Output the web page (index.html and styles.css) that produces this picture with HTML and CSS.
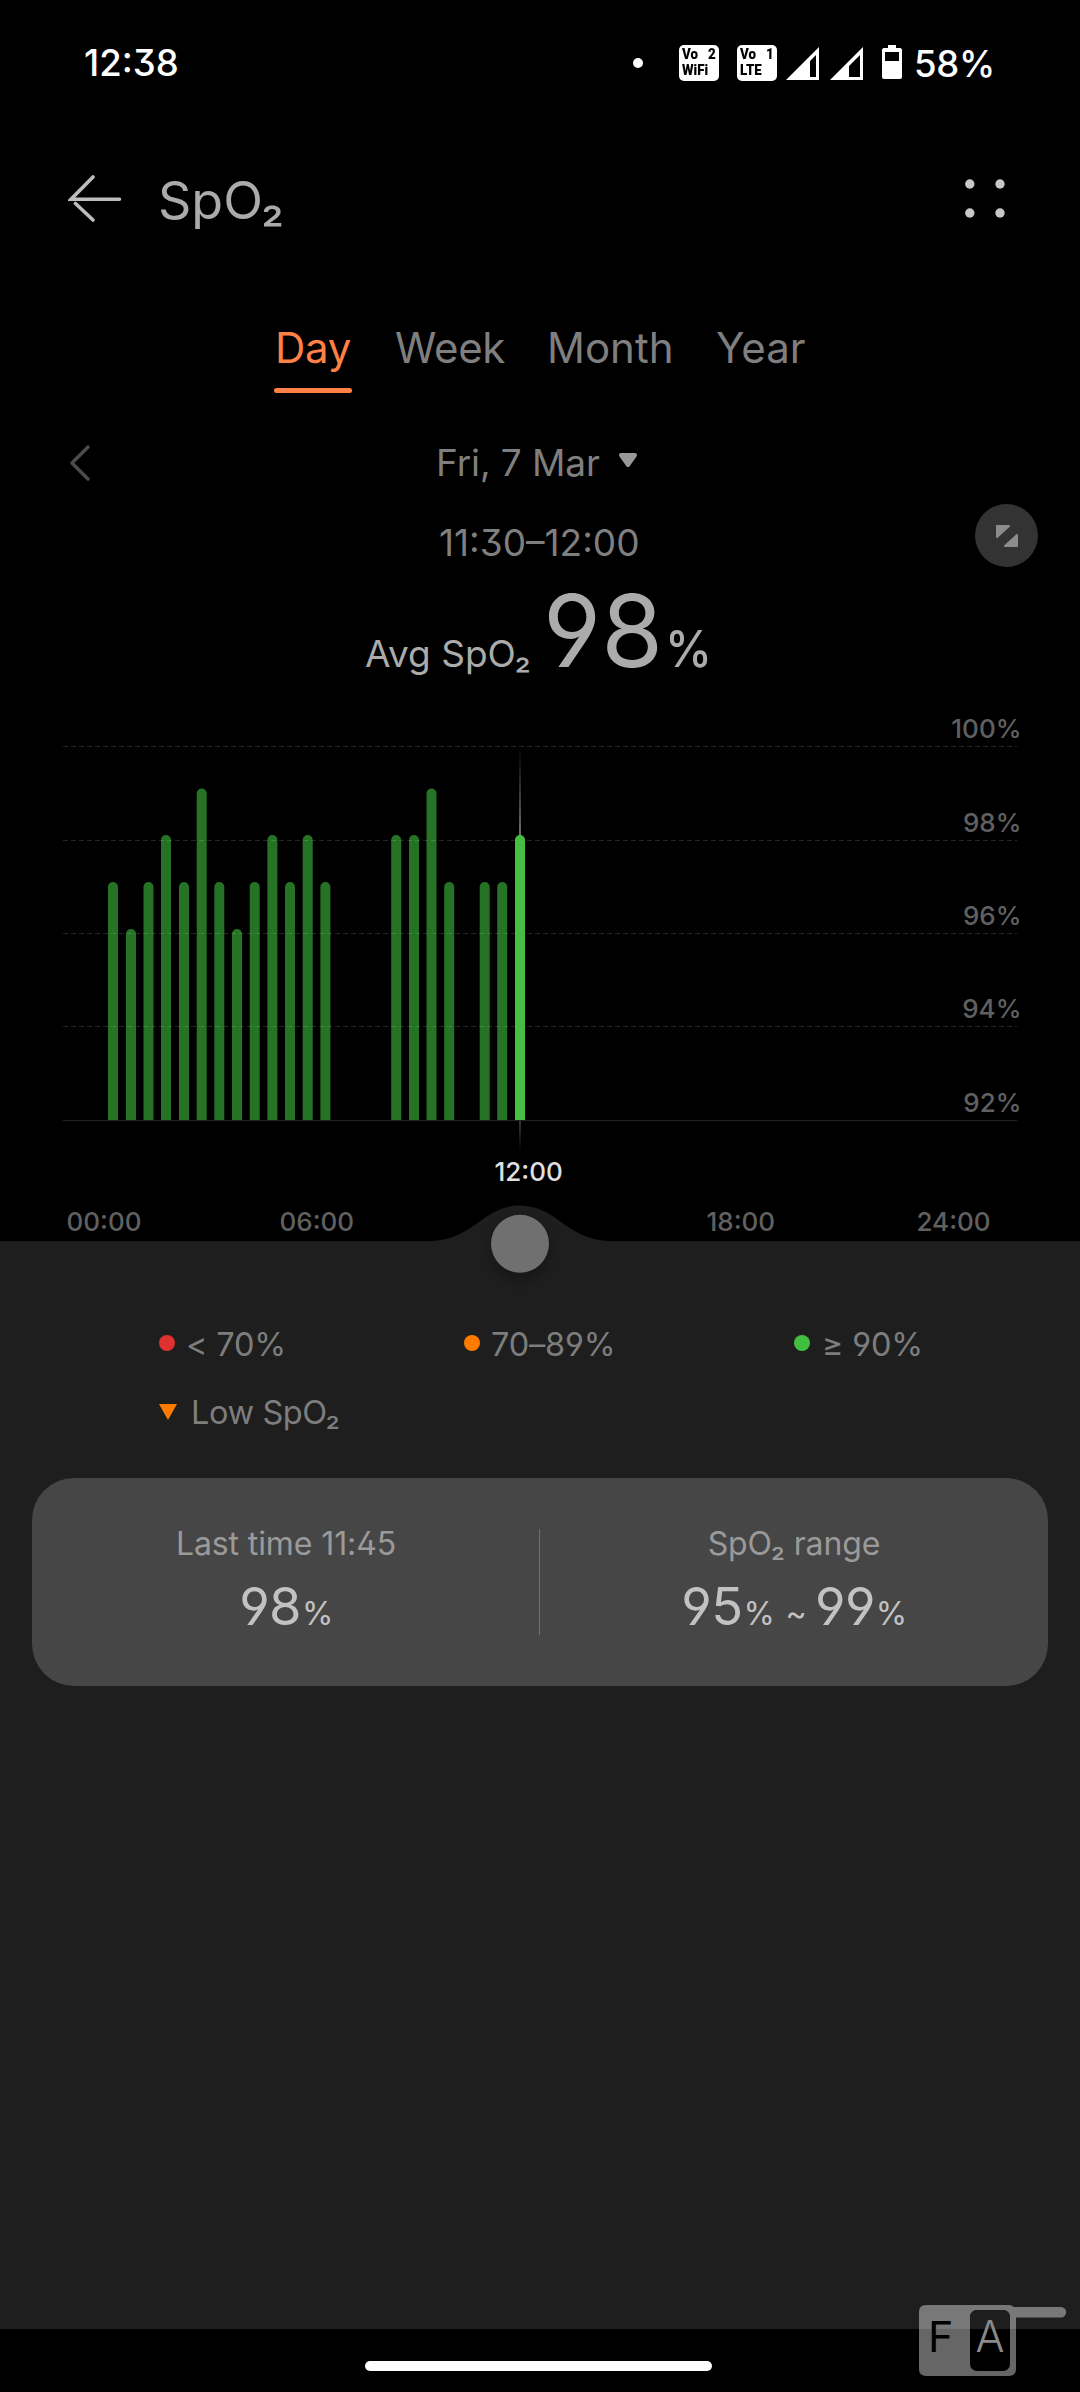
FILE: index.html
```html
<!DOCTYPE html>
<html lang="en">
<head>
<meta charset="utf-8">
<title>SpO₂</title>
<link rel="stylesheet" href="styles.css">
</head>
<body>
<div class="screen">
  <div class="status">
    <span class="clock">12:38</span>
    <span class="notice"></span>
    <div class="vo vo-wifi"><div class="vo-top"><b>Vo</b><b>2</b></div><b>WiFi</b></div>
    <div class="vo"><div class="vo-top"><b>Vo</b><b>1</b></div><b>LTE</b></div>
    <svg class="signal" width="33" height="33" viewBox="0 0 33 33"><path fill="#fff" fill-rule="evenodd" d="M33 0V33H0ZM30 8 24 14V30H30Z"/></svg>
    <svg class="signal signal-2" width="33" height="33" viewBox="0 0 33 33"><path fill="#fff" fill-rule="evenodd" d="M33 0V33H0ZM30 8 19 19V30H30Z"/></svg>
    <svg class="battery" width="20" height="34" viewBox="0 0 20 34"><path fill="#fff" fill-rule="evenodd" d="M6 0H14V3H18Q20 3 20 5V32Q20 34 18 34H2Q0 34 0 32V5Q0 3 2 3H6ZM3 7V16H17V7Z"/></svg>
    <span class="charge">58%</span>
  </div>

  <header class="header">
    <svg class="back" width="54" height="50" viewBox="0 0 54 50" fill="none" stroke="#bdbdbd" stroke-width="3.6" stroke-linecap="round"><path d="M25 3 3 25.300H51.500M7.500 29.500 25 46"/></svg>
    <h1 class="title">SpO₂</h1>
    <svg class="more" width="40" height="40" viewBox="0 0 40 40" fill="#c8c8c8"><circle cx="4.8" cy="5" r="4.7"/><circle cx="35" cy="5" r="4.7"/><circle cx="4.8" cy="34" r="4.7"/><circle cx="35" cy="34" r="4.7"/></svg>
  </header>

  <nav class="tabs">
    <span class="tab tab-active">Day</span><span class="tab tab-week">Week</span><span class="tab tab-month">Month</span><span class="tab">Year</span>
  </nav>

  <div class="date-row">
    <svg class="prev" width="24" height="38" viewBox="0 0 24 38" fill="none" stroke="#4c4c4c" stroke-width="3.4" stroke-linecap="round" stroke-linejoin="round"><path d="M20 3 4 19 20 35"/></svg>
    <span class="date">Fri, 7 Mar</span>
    <svg class="caret" width="20" height="16" viewBox="0 0 20 16"><path fill="#999" stroke="#999" stroke-width="4" stroke-linejoin="round" d="M3 3H17L10 13Z"/></svg>
  </div>

  <div class="range-row">
    <span class="range">11:30–12:00</span>
    <div class="expand"><svg width="24" height="24" viewBox="0 0 24 24" fill="#8c8c8c" stroke="#8c8c8c" stroke-width="2" stroke-linejoin="round"><path d="M2 2H14L2 13ZM22 11V22H10Z"/></svg></div>
  </div>

  <div class="average">
    <span class="avg-label">Avg SpO₂</span><span class="avg-value">98</span><span class="avg-unit">%</span>
  </div>

  <svg class="chart" width="1080" height="560" viewBox="0 681 1080 560">
    <defs>
      <linearGradient id="up" x1="0" y1="0" x2="0" y2="1"><stop offset="0" stop-color="#666" stop-opacity="0"/><stop offset="1" stop-color="#707070"/></linearGradient>
      <linearGradient id="down" x1="0" y1="0" x2="0" y2="1"><stop offset="0" stop-color="#3a3a3a"/><stop offset="1" stop-color="#333" stop-opacity="0"/></linearGradient>
      <filter id="soft" x="-50%" y="-50%" width="200%" height="200%"><feGaussianBlur stdDeviation="7"/></filter>
    </defs>
    <g fill="#267326">
      <path d="M108 1120V887a5 5 0 0 1 10 0V1120Z"/>
      <path d="M126 1120V934a5 5 0 0 1 10 0V1120Z"/>
      <path d="M143.500 1120V887a5 5 0 0 1 10 0V1120Z"/>
      <path d="M161 1120V840a5 5 0 0 1 10 0V1120Z"/>
      <path d="M179 1120V887a5 5 0 0 1 10 0V1120Z"/>
      <path d="M196.700 1120V793.500a5 5 0 0 1 10 0V1120Z"/>
      <path d="M214.300 1120V887a5 5 0 0 1 10 0V1120Z"/>
      <path d="M232 1120V934a5 5 0 0 1 10 0V1120Z"/>
      <path d="M249.700 1120V887a5 5 0 0 1 10 0V1120Z"/>
      <path d="M267.400 1120V840a5 5 0 0 1 10 0V1120Z"/>
      <path d="M285 1120V887a5 5 0 0 1 10 0V1120Z"/>
      <path d="M302.700 1120V840a5 5 0 0 1 10 0V1120Z"/>
      <path d="M320.400 1120V887a5 5 0 0 1 10 0V1120Z"/>
      <path d="M391.200 1120V840a5 5 0 0 1 10 0V1120Z"/>
      <path d="M409 1120V840a5 5 0 0 1 10 0V1120Z"/>
      <path d="M426.500 1120V793.500a5 5 0 0 1 10 0V1120Z"/>
      <path d="M444.200 1120V887a5 5 0 0 1 10 0V1120Z"/>
      <path d="M479.700 1120V887a5 5 0 0 1 10 0V1120Z"/>
      <path d="M497.200 1120V887a5 5 0 0 1 10 0V1120Z"/>
    </g>
    <g stroke="#fff" stroke-opacity=".14" stroke-dasharray="5 3"><path d="M63 746.500H1017M63 840.500H1017M63 933.500H1017M63 1026.500H1017"/></g>
    <path stroke="#222" d="M63 1120.500H1017"/>
    <rect x="519" y="748" width="2" height="88" fill="url(#up)"/>
    <rect x="519" y="1121" width="2" height="31" fill="url(#down)"/>
    <path fill="#46bd43" d="M515 1120V840a5 5 0 0 1 10 0V1120Z"/>
    <g class="axis" text-anchor="end">
      <text x="1021.500" y="738">100%</text><text x="1021.500" y="832">98%</text><text x="1021.500" y="925">96%</text><text x="1021.500" y="1018">94%</text><text x="1021.500" y="1112">92%</text>
    </g>
    <text class="picked" x="494.500" y="1181">12:00</text>
    <g class="axis"><text x="66.500" y="1231">00:00</text><text x="279.500" y="1231">06:00</text><text x="706.500" y="1231">18:00</text><text x="916.500" y="1231">24:00</text></g>
    <path fill="#1e1e1e" d="M430 1241C474 1240 483 1205.500 520 1205.500S566 1240 610 1241Z"/>
    <circle cx="520" cy="1250" r="29" fill="#000" opacity=".3" filter="url(#soft)"/>
    <circle cx="520" cy="1243.700" r="29" fill="#707070"/>
  </svg>

  <main class="panel">
    <div class="legend">
      <div class="key"><i class="dot red"></i><span class="gap-lt">&lt; 70%</span></div>
      <div class="key"><i class="dot orange"></i><span class="gap-mid">70–89%</span></div>
      <div class="key"><i class="dot green"></i><span class="gap-ge">≥ 90%</span></div>
      <div class="key"><svg width="18" height="16" viewBox="0 0 18 16"><path fill="#ff7b00" d="M0 0H18L9 16Z"/></svg><span class="gap-low">Low SpO₂</span></div>
    </div>
    <section class="card">
      <div class="stat">
        <span class="stat-label">Last time 11:45</span>
        <div class="stat-value">98<small>%</small></div>
      </div>
      <div class="divider"></div>
      <div class="stat">
        <span class="stat-label">SpO₂ range</span>
        <div class="stat-value">95<small>%</small><small class="tilde">~</small>99<small>%</small></div>
      </div>
    </section>
  </main>
  <footer class="navbar"><div class="pill"></div></footer>
  <svg class="mark" width="148" height="72" viewBox="0 0 148 72">
    <path fill="#fff" fill-opacity=".4" fill-rule="evenodd" d="M7 0H90Q93 0 95 2H142a5.200 5.200 0 0 1 0 10.400H97V64Q97 71 90 71H7Q0 71 0 64V7Q0 0 7 0Z"/>
    <rect x="51" y="5" width="40" height="61" rx="7" fill="#000"/>
    <path fill="#1e1e1e" d="M51 24V12a7 7 0 0 1 7-7H84a7 7 0 0 1 7 7V24Z"/>
    <text class="mark-f" x="9" y="47">F</text><text class="mark-a" x="56.500" y="47">A</text>
  </svg>
</div>
</body>
</html>
```
FILE: styles.css
```css
* { box-sizing: border-box; }
body { margin: 0; background: #000; }
.screen {
  position: relative;
  width: 1080px;
  height: 2392px;
  display: flex;
  flex-direction: column;
  overflow: hidden;
  background: #000;
  color: #ababab;
  font-family: Inter, "Noto Sans", sans-serif;
  font-feature-settings: "ss01", "cv09";
}
.status { height: 126px; padding-left: 84px; display: flex; align-items: center; color: #fff; font-size: 36.500px; font-weight: 500; }
.clock { width: 549px; }
.notice { width: 10px; height: 10px; border-radius: 50%; background: #fff; margin-right: 36px; }
.vo {
  width: 40px; height: 36px; margin-right: 18px; padding: 2px 3px;
  border-radius: 5px; background: #fff; color: #000;
  font: 700 14.500px/15.500px Roboto, sans-serif;
}
.vo + .vo { margin-right: 9px; }
.vo b { display: block; transform: scaleX(.92); transform-origin: left; }
.vo-top { display: flex; justify-content: space-between; }
.signal { margin-right: 11px; }
.signal-2 { margin-right: 19px; }
.battery { margin: 0 12px 2px 0; }
.charge { padding-top: 2px; letter-spacing: -.3px; }

.header { height: 150px; padding: 0 75px 0 68px; display: flex; align-items: center; }
.back { margin-top: -4px; }
.title { margin: 0 auto 0 36px; font-size: 52px; font-weight: 400; line-height: 1; }
.more { margin-top: -4px; }

.tabs { height: 144px; padding: 0 0 2px 274px; display: flex; align-items: center; font-size: 42px; color: #7f7f7f; }
.tab-active { position: relative; color: #ff8147; width: 78px; margin-right: 43px; text-indent: 1px; letter-spacing: -.3px; }
.tab-active::after { content: ""; position: absolute; left: 0; width: 78px; top: 66px; height: 5px; border-radius: 3px; background: #ff8147; }
.tab-week { width: 152px; letter-spacing: -.3px; }
.tab-month { width: 169px; }

.date-row { height: 85px; padding-left: 68px; display: flex; align-items: center; font-size: 37px; color: #7f7f7f; }
.date { margin-left: 344px; letter-spacing: -.1px; }
.caret { margin: -5px 0 0 18px; }

.range-row { height: 75px; padding: 0 42px 0 439px; display: flex; align-items: center; justify-content: space-between; font-size: 37px; color: #7f7f7f; }
.expand { width: 63px; height: 63px; margin-top: -14px; border-radius: 50%; background: #333; display: flex; align-items: center; justify-content: center; }

.average { height: 101px; padding-left: 365px; display: flex; align-items: baseline; line-height: 101px; }
.avg-label { width: 178px; font-size: 37px; }
.avg-value { width: 122px; font-size: 100px; }
.avg-unit { font-size: 51px; font-weight: 500; transform: scaleX(.93); transform-origin: left; }

.chart { display: block; flex: none; overflow: visible; position: relative; }
.axis { font-size: 26px; font-weight: 500; fill: #606060; font-feature-settings: normal; }
.picked { font-size: 26px; font-weight: 500; fill: #e0e0e0; }

.panel { height: 1088px; flex: none; background: #1e1e1e; }
.legend { height: 237px; padding: 69px 0 0 159px; display: grid; grid-template-columns: 305px 330px 1fr; grid-auto-rows: 68px; font-size: 32.500px; letter-spacing: -.2px; color: #7d7d7d; }
.key { display: flex; align-items: center; }
.dot { width: 16px; height: 16px; border-radius: 50%; margin-top: -3px; }
.red { background: #e03131; }
.orange { background: #ff7b00; }
.green { background: #43bf40; }
.gap-lt { margin-left: 11px; }
.gap-mid { margin-left: 11px; }
.gap-ge { margin-left: 12px; }
.gap-low { margin-left: 14px; letter-spacing: -.4px; }
.card { height: 208px; margin: 0 32px; border-radius: 42px; background: #464646; display: flex; align-items: center; }
.stat { flex: 1; padding: 15px 0 0; display: flex; flex-direction: column; align-items: center; }
.stat-label { font-size: 32px; line-height: 40px; letter-spacing: -.1px; color: #9a9a9a; }
.stat-value { font-size: 52.500px; line-height: 84px; letter-spacing: -.6px; color: #c2c2c2; }
.stat-value small { font-size: 32px; margin-left: 1px; }
.stat-value .tilde { margin: 0 9px 0 11px; }
.divider { width: 1px; height: 106px; margin-left: -1px; background: #707070; }

.navbar { height: 63px; display: flex; justify-content: center; padding: 32px 3px 0 0; }
.pill { width: 347px; height: 10px; border-radius: 5px; background: #fff; }
.mark { position: absolute; left: 919px; top: 2305px; }
.mark-f { font: 400 43px Inter, sans-serif; fill: #000; }
.mark-a { font: 300 43px Inter, sans-serif; fill: #8a8a8a; }
```
